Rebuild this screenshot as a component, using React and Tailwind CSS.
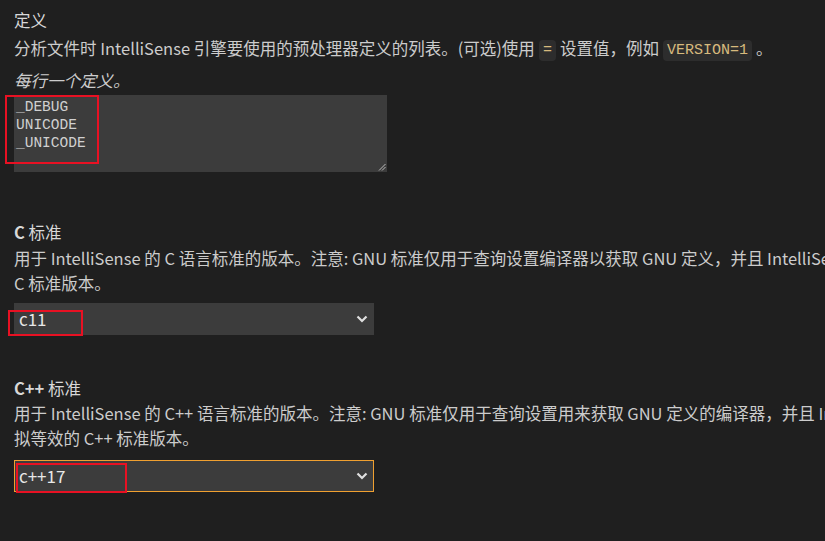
import React from "react";

const sans = { fontFamily: '"Noto Sans CJK SC", "Noto Sans", sans-serif' };

function Code({ children }) {
  return (
    <span className="inline-flex items-center h-[21px] px-[4px] rounded-[4px] bg-[#2d2d2d] text-[#d7ba7d] text-[15px] align-middle mx-[4px] font-['Liberation_Mono',monospace]">
      {children}
    </span>
  );
}

function Chevron() {
  return (
    <svg width="12" height="8" viewBox="0 0 12 8" className="text-[#e0e0e0]">
      <polyline points="1.5,1.5 6,6 10.5,1.5" fill="none" stroke="currentColor" strokeWidth="2.2" />
    </svg>
  );
}

function RedBox({ className }) {
  return <div className={"absolute border-2 border-[#e81123] pointer-events-none " + className} />;
}

export default function App() {
  return (
    <div
      className="relative w-[825px] h-[541px] overflow-hidden bg-[#1f1f1f] text-[#cccccc] pl-[14px] text-[16.5px]"
      style={sans}
    >
      {/* 定义 */}
      <div className="mt-[10px] h-[20px] leading-[20px] text-[#d8d8d8]">定义</div>
      <div className="mt-[6px] h-[24px] leading-[24px] whitespace-nowrap">
        分析文件时 IntelliSense 引擎要使用的预处理器定义的列表。(可选)使用<Code>=</Code>设置值，例如<Code>VERSION=1</Code>。
      </div>
      <div className="mt-[8px] h-[24px] leading-[24px] italic">每行一个定义。</div>
      <div className="relative mt-[3px] w-[373px] h-[77px] bg-[#3c3c3c] pt-[3px] pl-[2px] font-['Liberation_Mono',monospace] text-[14.5px] leading-[18px] text-[#d0d0d0]">
        <div>_DEBUG</div>
        <div>UNICODE</div>
        <div>_UNICODE</div>
        <svg className="absolute right-[1px] bottom-[1px]" width="8" height="8" viewBox="0 0 8 8">
          <line x1="1" y1="7.5" x2="7.5" y2="1" stroke="#bbbbbb" strokeWidth="1" />
          <line x1="4" y1="7.5" x2="7.5" y2="4" stroke="#bbbbbb" strokeWidth="1" />
        </svg>
      </div>

      {/* C 标准 */}
      <div className="mt-[50px] h-[20px] leading-[20px] text-[#d8d8d8]">
        <span className="font-bold">C</span> 标准
      </div>
      <div className="mt-[4px] leading-[25px] whitespace-nowrap">
        <div>用于 IntelliSense 的 C 语言标准的版本。注意: GNU 标准仅用于查询设置编译器以获取 GNU 定义，并且 IntelliSense 将模拟等效的</div>
        <div>C 标准版本。</div>
      </div>
      <div className="mt-[7px] w-[360px] h-[32px] bg-[#3c3c3c] flex items-center justify-between pl-[5px] pr-[6px] text-[17px] text-[#e8e8e8]">
        <span>c11</span>
        <Chevron />
      </div>

      {/* C++ 标准 */}
      <div className="mt-[43px] h-[20px] leading-[20px] text-[#d8d8d8]">
        <span className="font-bold">C++</span> 标准
      </div>
      <div className="mt-[3px] leading-[25px] whitespace-nowrap">
        <div>用于 IntelliSense 的 C++ 语言标准的版本。注意: GNU 标准仅用于查询设置用来获取 GNU 定义的编译器，并且 IntelliSense 将模</div>
        <div>拟等效的 C++ 标准版本。</div>
      </div>
      <div className="mt-[9px] w-[360px] h-[32px] bg-[#3c3c3c] border border-[#f0a030] flex items-center justify-between pl-[4px] pr-[5px] text-[17px] text-[#e8e8e8]">
        <span>c++17</span>
        <Chevron />
      </div>

      {/* annotation boxes */}
      <RedBox className="left-[5px] top-[95px] w-[94px] h-[69px]" />
      <RedBox className="left-[8px] top-[310px] w-[75px] h-[26px]" />
      <RedBox className="left-[16px] top-[463px] w-[111px] h-[30px]" />
    </div>
  );
}
